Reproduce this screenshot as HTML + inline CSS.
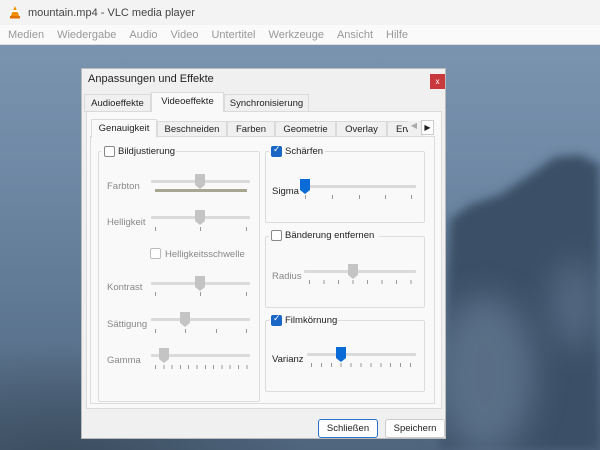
<!DOCTYPE html><html><head><meta charset="utf-8"><style>
*{margin:0;padding:0;box-sizing:border-box}
body{width:600px;height:450px;overflow:hidden;position:relative;font-family:"Liberation Sans",sans-serif;font-size:9.5px;color:#222}
.a{position:absolute}
#bg{left:0;top:45px;width:600px;height:405px;background:
radial-gradient(ellipse 250px 120px at 60px 420px,#3a4c5e 0%,rgba(58,76,94,0) 100%),
linear-gradient(180deg,#7a93af 0%,#6f89a6 30%,#617a95 60%,#4f657d 100%)}
.t{color:#888}
.grp{position:absolute;border:1px solid #dcdcdc;border-radius:2px}
.cb{position:absolute;width:11px;height:11px;border:1px solid #888;border-radius:2px;background:#fff}
.cbon{background:#1a66c4;border-color:#1a66c4}
.trk{position:absolute;height:3px;background:#dadada;border-radius:1px}
.tk{position:absolute;width:1px;height:4px;background:#999}
.tab{position:absolute;top:0;height:18px;padding-top:3px;text-align:center;border:1px solid #dadada;background:#f0f0f0}
</style></head><body>
<div class="a" style="left:0;top:0;width:600px;height:25px;background:#f3f3f3"></div>
<svg class="a" style="left:8px;top:5px" width="14" height="14"><polygon points="7,1 12,13 2,13" fill="#f28c00"/><rect x="3" y="5" width="8" height="2" fill="#fff"/><rect x="2" y="11" width="10" height="2.5" fill="#e07000"/></svg>
<div class="a" style="left:28px;top:7px;font-size:11px;color:#444">mountain.mp4 - VLC media player</div>
<div class="a" style="left:0;top:25px;width:600px;height:20px;background:#fafafa;border-bottom:1px solid #ddd"></div>
<div class="a" style="left:8px;top:29px;font-size:11px;color:#999;word-spacing:0"><span style="margin-right:13px">Medien</span><span style="margin-right:13px">Wiedergabe</span><span style="margin-right:13px">Audio</span><span style="margin-right:13px">Video</span><span style="margin-right:13px">Untertitel</span><span style="margin-right:13px">Werkzeuge</span><span style="margin-right:13px">Ansicht</span><span>Hilfe</span></div>
<div id="bg" class="a"></div>
<svg class="a" style="left:0;top:45px" width="600" height="405">
<defs><filter id="b" filterUnits="userSpaceOnUse" x="0" y="0" width="600" height="405"><feGaussianBlur stdDeviation="5"/></filter><filter id="b2" filterUnits="userSpaceOnUse" x="0" y="0" width="600" height="405"><feGaussianBlur stdDeviation="16"/></filter></defs>
<polygon points="450,175 470,160 500,150 530,130 555,112 580,110 600,120 600,405 440,405" fill="#3a4f66" filter="url(#b)"/>
<ellipse cx="485" cy="330" rx="50" ry="80" fill="#6d849c" opacity="0.6" filter="url(#b2)"/>
<ellipse cx="575" cy="260" rx="25" ry="45" fill="#7790a8" opacity="0.4" filter="url(#b2)"/>
</svg>

<div class="a" style="left:81px;top:68px;width:365px;height:371px;background:#f0f0f0;border:1px solid #bbb"></div>
<div class="a" style="left:88px;top:73px;font-size:11px">Anpassungen und Effekte</div>
<div class="a" style="left:430px;top:74px;width:15px;height:15px;background:#c8393d;color:#fff;font-size:8px;text-align:center;line-height:15px">x</div>

<div class="a" style="left:86px;top:111px;width:356px;height:298px;background:#f9f9f9;border:1px solid #dcdcdc"></div>
<div class="tab" style="left:84px;top:94px;width:67px">Audioeffekte</div>
<div class="tab" style="left:151px;top:92px;width:73px;height:20px;background:#f9f9f9;border-bottom:none">Videoeffekte</div>
<div class="tab" style="left:224px;top:94px;width:85px">Synchronisierung</div>

<div class="a" style="left:90px;top:136px;width:345px;height:268px;background:#f9f9f9;border:1px solid #dcdcdc"></div>
<div class="tab" style="left:91px;top:119px;width:66px;height:19px;background:#f9f9f9;border-bottom:none">Genauigkeit</div>
<div class="tab" style="left:157px;top:121px;width:70px;height:16px;padding-top:2px">Beschneiden</div>
<div class="tab" style="left:227px;top:121px;width:48px;height:16px;padding-top:2px">Farben</div>
<div class="tab" style="left:275px;top:121px;width:61px;height:16px;padding-top:2px">Geometrie</div>
<div class="tab" style="left:336px;top:121px;width:51px;height:16px;padding-top:2px">Overlay</div>
<div class="tab" style="left:387px;top:121px;width:36px;height:16px;padding-top:2px;text-align:left;padding-left:8px">Erw</div>
<div class="a" style="left:408px;top:121px;width:12px;height:14px;background:#f0f0f0;color:#aaa;font-size:8px;text-align:center">◀</div>
<div class="a" style="left:421px;top:120px;width:13px;height:15px;background:#fff;border:1px solid #ccc;font-size:8px;text-align:center;line-height:13px">▶</div>

<div class="grp" style="left:98px;top:151px;width:162px;height:251px"></div>
<div class="a" style="left:101px;top:145px;width:75px;height:12px;background:#f9f9f9"></div>
<div class="cb" style="left:104px;top:146px"></div>
<div class="a" style="left:118px;top:146px">Bildjustierung</div>
<div class="a t" style="left:107px;top:181px">Farbton</div>
<div class="trk" style="left:151px;top:180px;width:99px"></div>
<div class="a" style="left:155px;top:189px;width:92px;height:3px;background:#a8a592"></div>
<div class="a t" style="left:107px;top:217px">Helligkeit</div>
<div class="trk" style="left:151px;top:216px;width:99px"></div>
<div class="tk" style="left:155px;top:227px"></div><div class="tk" style="left:200px;top:227px"></div><div class="tk" style="left:246px;top:227px"></div>
<div class="cb" style="left:150px;top:248px;border-color:#bbb"></div>
<div class="a t" style="left:165px;top:249px">Helligkeitsschwelle</div>
<div class="a t" style="left:107px;top:282px">Kontrast</div>
<div class="trk" style="left:151px;top:282px;width:99px"></div>
<div class="tk" style="left:155px;top:292px"></div><div class="tk" style="left:200px;top:292px"></div><div class="tk" style="left:246px;top:292px"></div>
<div class="a t" style="left:107px;top:319px">Sättigung</div>
<div class="trk" style="left:151px;top:318px;width:99px"></div>
<div class="tk" style="left:155px;top:329px"></div><div class="tk" style="left:185px;top:329px"></div><div class="tk" style="left:216px;top:329px"></div><div class="tk" style="left:246px;top:329px"></div>
<div class="a t" style="left:107px;top:355px">Gamma</div>
<div class="trk" style="left:151px;top:354px;width:99px"></div>
<div class="a" style="left:155px;top:365px;width:93px;height:4px;background:repeating-linear-gradient(90deg,#999 0 1px,transparent 1px 8.3px)"></div>

<div class="grp" style="left:265px;top:151px;width:160px;height:72px"></div>
<div class="a" style="left:269px;top:145px;width:56px;height:12px;background:#f9f9f9"></div>
<div class="cb cbon" style="left:271px;top:146px"></div><div class="a" style="left:273px;top:144px;color:#fff;font-size:9px">✓</div>
<div class="a" style="left:285px;top:146px">Schärfen</div>
<div class="a" style="left:272px;top:186px">Sigma</div>
<div class="trk" style="left:304px;top:185px;width:112px"></div>
<div class="tk" style="left:305px;top:195px"></div><div class="tk" style="left:332px;top:195px"></div><div class="tk" style="left:359px;top:195px"></div><div class="tk" style="left:385px;top:195px"></div><div class="tk" style="left:411px;top:195px"></div>

<div class="grp" style="left:265px;top:236px;width:160px;height:72px"></div>
<div class="a" style="left:269px;top:230px;width:110px;height:12px;background:#f9f9f9"></div>
<div class="cb" style="left:271px;top:230px"></div>
<div class="a" style="left:285px;top:230px">Bänderung entfernen</div>
<div class="a t" style="left:272px;top:271px">Radius</div>
<div class="trk" style="left:304px;top:270px;width:112px"></div>
<div class="a" style="left:309px;top:280px;width:104px;height:4px;background:repeating-linear-gradient(90deg,#999 0 1px,transparent 1px 14.5px)"></div>

<div class="grp" style="left:265px;top:320px;width:160px;height:72px"></div>
<div class="a" style="left:269px;top:314px;width:68px;height:12px;background:#f9f9f9"></div>
<div class="cb cbon" style="left:271px;top:315px"></div><div class="a" style="left:273px;top:313px;color:#fff;font-size:9px">✓</div>
<div class="a" style="left:285px;top:315px">Filmkörnung</div>
<div class="a" style="left:272px;top:354px">Varianz</div>
<div class="trk" style="left:307px;top:353px;width:109px"></div>
<div class="a" style="left:311px;top:363px;width:104px;height:4px;background:repeating-linear-gradient(90deg,#999 0 1px,transparent 1px 9.9px)"></div>

<svg class="a" style="left:0;top:0" width="600" height="450">
<defs><path id="th" d="M-5,-7 H5 V4 L0,8 L-5,4 Z"/></defs>
<g fill="#c4c4c4"><use href="#th" x="200" y="181"/><use href="#th" x="200" y="217"/><use href="#th" x="200" y="283"/><use href="#th" x="185" y="319"/><use href="#th" x="164" y="355"/><use href="#th" x="353" y="271"/></g>
<g fill="#0a6ad6"><use href="#th" x="305" y="186"/><use href="#th" x="341" y="354"/></g>
</svg>

<div class="a" style="left:318px;top:419px;width:60px;height:19px;border:1px solid #2a74c8;border-radius:3px;background:#fdfdfd;text-align:center;line-height:17px">Schließen</div>
<div class="a" style="left:385px;top:419px;width:60px;height:19px;border:1px solid #ccc;border-radius:3px;background:#fdfdfd;text-align:center;line-height:17px">Speichern</div>
</body></html>
